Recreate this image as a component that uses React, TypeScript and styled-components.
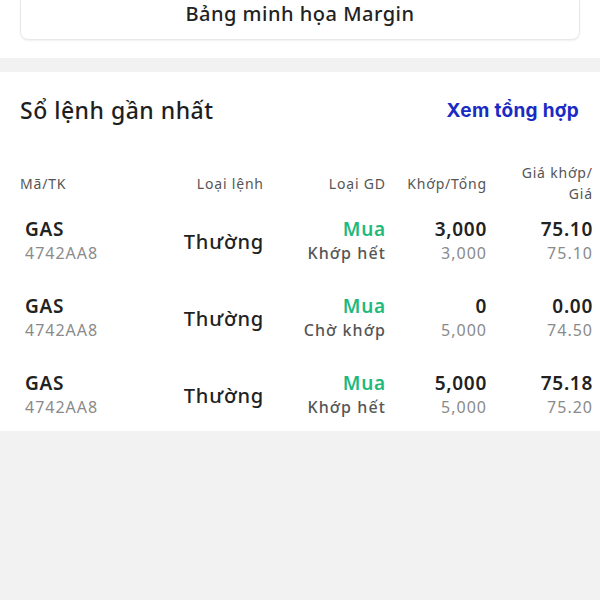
import React from 'react';
import styled, { createGlobalStyle } from 'styled-components';

const GlobalStyle = createGlobalStyle`
  html, body {
    margin: 0;
    padding: 0;
    background: #f2f2f2;
    font-family: 'Noto Sans', 'Open Sans', sans-serif;
    -webkit-font-smoothing: antialiased;
  }
`;

type Order = {
  code: string;
  account: string;
  orderType: string;
  side: string;
  status: string;
  matched: string;
  total: string;
  matchPrice: string;
  price: string;
};

const orders: Order[] = [
  {
    code: 'GAS',
    account: '4742AA8',
    orderType: 'Thường',
    side: 'Mua',
    status: 'Khớp hết',
    matched: '3,000',
    total: '3,000',
    matchPrice: '75.10',
    price: '75.10',
  },
  {
    code: 'GAS',
    account: '4742AA8',
    orderType: 'Thường',
    side: 'Mua',
    status: 'Chờ khớp',
    matched: '0',
    total: '5,000',
    matchPrice: '0.00',
    price: '74.50',
  },
  {
    code: 'GAS',
    account: '4742AA8',
    orderType: 'Thường',
    side: 'Mua',
    status: 'Khớp hết',
    matched: '5,000',
    total: '5,000',
    matchPrice: '75.18',
    price: '75.20',
  },
];

const App = () => {
  return (
    <>
      <GlobalStyle />
      <TopArea>
        <MarginButton>Bảng minh họa Margin</MarginButton>
      </TopArea>
      <Section>
        <SectionHeader>
          <SectionTitle>Sổ lệnh gần nhất</SectionTitle>
          <SummaryLink>Xem tổng hợp</SummaryLink>
        </SectionHeader>
        <HeadRow>
          <HeadCell>Mã/TK</HeadCell>
          <HeadCell $right>Loại lệnh</HeadCell>
          <HeadCell $right>Loại GD</HeadCell>
          <HeadCell $right>Khớp/Tổng</HeadCell>
          <HeadCell $right>
            Giá khớp/
            <br />
            Giá
          </HeadCell>
        </HeadRow>
        <Body>
          {orders.map((o, i) => (
            <React.Fragment key={i}>
              <Cell>
                <Primary>{o.code}</Primary>
                <Secondary>{o.account}</Secondary>
              </Cell>
              <Cell $right>
                <OrderType>{o.orderType}</OrderType>
              </Cell>
              <Cell $right>
                <Side>{o.side}</Side>
                <Status>{o.status}</Status>
              </Cell>
              <Cell $right>
                <Primary>{o.matched}</Primary>
                <Secondary>{o.total}</Secondary>
              </Cell>
              <Cell $right>
                <Primary>{o.matchPrice}</Primary>
                <Secondary>{o.price}</Secondary>
              </Cell>
            </React.Fragment>
          ))}
        </Body>
      </Section>
    </>
  );
};

export default App;

const columns = '1fr 120px 122px 101px 106px';

const TopArea = styled.div`
  background: #fff;
  padding: 0 20px 18px;
`;

const MarginButton = styled.div`
  height: 40px;
  box-sizing: border-box;
  border: 1px solid #e8e8e8;
  border-top: none;
  border-radius: 0 0 8px 8px;
  box-shadow: 0 1px 2px rgba(0, 0, 0, 0.06);
  display: flex;
  align-items: flex-start;
  justify-content: center;
  padding-top: 0;
  font-size: 20px;
  letter-spacing: 0.5px;
  font-weight: 500;
  color: #222;
`;

const Section = styled.div`
  margin-top: 14px;
  background: #fff;
  padding: 22px 8px 12px 20px;
`;

const SectionHeader = styled.div`
  display: flex;
  align-items: center;
  justify-content: space-between;
  padding-right: 13px;
`;

const SectionTitle = styled.div`
  font-size: 23px;
  letter-spacing: 0.5px;
  font-weight: 500;
  color: #1e1e1e;
`;

const SummaryLink = styled.div`
  font-family: 'Inter', 'Roboto', sans-serif;
  font-size: 19px;
  letter-spacing: 0.3px;
  font-weight: 700;
  color: #1a2bc4;
`;

const HeadRow = styled.div`
  margin-top: 36px;
  display: grid;
  grid-template-columns: ${columns};
  align-items: center;
  margin-bottom: 13px;
`;

const HeadCell = styled.div<{ $right?: boolean }>`
  font-size: 14px;
  line-height: 21px;
  letter-spacing: 0.8px;
  color: #555;
  text-align: ${(p) => (p.$right ? 'right' : 'left')};
  margin-right: ${(p) => (p.$right ? '-0.8px' : '0')};
`;

const Body = styled.div`
  display: grid;
  grid-template-columns: ${columns};
  row-gap: 29px;
  align-items: center;
`;

const Cell = styled.div<{ $right?: boolean }>`
  display: flex;
  flex-direction: column;
  align-items: ${(p) => (p.$right ? 'flex-end' : 'flex-start')};
  padding-left: ${(p) => (p.$right ? '0' : '5px')};
  margin-right: ${(p) => (p.$right ? '-1px' : '0')};
`;

const Primary = styled.div`
  font-size: 19px;
  line-height: 24px;
  letter-spacing: 0.7px;
  font-weight: 600;
  color: #222;
`;

const Secondary = styled.div`
  font-size: 16px;
  line-height: 24px;
  letter-spacing: 1px;
  color: #8a8a8a;
`;

const OrderType = styled.div`
  font-size: 20px;
  letter-spacing: 0.8px;
  font-weight: 500;
  color: #222;
`;

const Side = styled.div`
  font-size: 19px;
  line-height: 24px;
  letter-spacing: 0.8px;
  font-weight: 600;
  color: #1eb97d;
`;

const Status = styled.div`
  font-size: 16px;
  line-height: 24px;
  letter-spacing: 1.1px;
  font-weight: 500;
  color: #555;
`;
